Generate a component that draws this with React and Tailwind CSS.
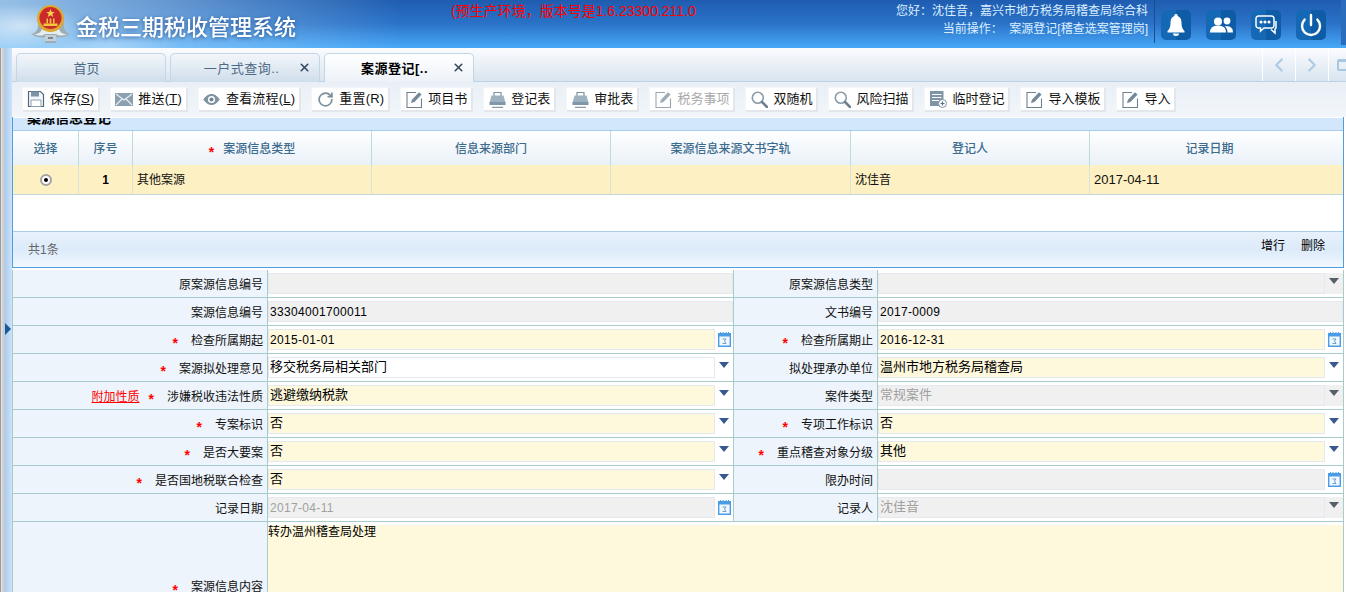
import React from 'react';
import { Power, RotateCw, ChevronLeft, ChevronRight, X } from 'lucide-react';

const Emblem = () => (
  <svg width="40" height="40" viewBox="0 0 40 40" className="mr-[5px] shrink-0">
    <path d="M0 30 C6 29 8 24 7 16 C11 26 29 26 33 16 C32 24 34 29 39 30 C33 34 28 34 25 33 L25 39 L14 39 L14 33 C11 34 6 34 0 30Z" fill="#9eacb5" />
    <path d="M3 30 C8 30 10 28 11 25 C14 28 25 28 28 25 C29 28 31 30 36 30 C31 32 28 32 25 30 L14 30 C11 32 8 32 3 30Z" fill="#e6edf1" />
    <path d="M14 31h11v6H14z" fill="#c4d0d6" />
    <path d="M17 33h5v2h-5z" fill="#76868f" />
    <circle cx="19.500" cy="14.500" r="13.500" fill="#dcaa2e" />
    <circle cx="19.500" cy="14" r="11" fill="#cb2a2c" />
    <path d="M19.500 5l1.200 3h3l-2.400 2 1 3-2.800-1.800L16.700 13l1-3-2.400-2h3z" fill="#f6d24a" />
    <path d="M12.500 19.500h14V22h-14z" fill="#f2c83c" />
    <path d="M15.500 14.500H17v5h-1.500zM22 14.500h1.500v5H22zM18.700 14.500h1.600v5h-1.600z" fill="#f2c83c" />
  </svg>
);

const Tile = ({ children }) => (
  <div className="w-[30px] h-[30px] rounded-[5px] flex items-center justify-center bg-[linear-gradient(to_right,#1568b4_50%,#0f5ca6_50%)]">
    {children}
  </div>
);

const IconSave = () => (
  <svg width="18" height="18" viewBox="0 0 18 18" fill="none">
    <path d="M1.500 1.500h12l3 3v12h-15z" fill="#f5f8fa" stroke="#54687a" strokeWidth="1.200" />
    <path d="M4 1.500h8v5H4z" fill="#7d93a6" />
    <path d="M4 10h10v6.500H4z" fill="#fff" stroke="#8aa0b2" />
  </svg>
);
const IconMail = () => (
  <svg width="18" height="13" viewBox="0 0 18 13">
    <path d="M0 0h18v13H0z" fill="#8ba0b0" />
    <path d="M1 1l8 6 8-6M1 12l6-6M17 12l-6-6" fill="none" stroke="#e8eef3" strokeWidth="1.200" />
  </svg>
);
const IconEye = () => (
  <svg width="17" height="11" viewBox="0 0 18 12">
    <path d="M0 6C3 1.500 6 0 9 0s6 1.500 9 6c-3 4.500-6 6-9 6S3 10.500 0 6Z" fill="#7d939f" />
    <circle cx="9" cy="6" r="3.900" fill="#fff" />
    <circle cx="9" cy="6" r="2.200" fill="#6d8491" />
  </svg>
);
const IconEdit = ({ faded }) => (
  <svg width="17" height="17" viewBox="0 0 17 17" fill="none" className={faded ? 'opacity-70' : ''}>
    <path d="M10 1.500H1v15h14.500V7.500" stroke="#6f8190" strokeWidth="1.100" />
    <path d="M5 12l.9-3.300L13 1.200l2.600 2.400L8.500 11z" fill="#75899a" />
  </svg>
);
const IconBag = () => (
  <svg width="17" height="17" viewBox="0 0 17 17" fill="none">
    <path d="M5 5V1.500h7V5" stroke="#7e92a0" strokeWidth="1.200" />
    <path d="M0.500 12L2.500 4.500h12l2 7.500z" fill="#9db1bf" />
    <path d="M0.500 11h16v3h-16z" fill="#7f97a8" />
    <path d="M3 16.300h11" stroke="#6f8190" />
  </svg>
);
const IconDocPlus = () => (
  <svg width="17" height="17" viewBox="0 0 17 17" fill="none">
    <path d="M0 0h13.500v15H0z" fill="#7e95a6" />
    <path d="M2 3.500h9.500M2 6.500h9.500M2 9.500h7" stroke="#fff" strokeWidth="1.200" />
    <circle cx="12.500" cy="12.500" r="4" fill="#fff" stroke="#7e95a6" />
    <path d="M12.500 10.500v4M10.500 12.500h4" stroke="#56707f" strokeWidth="1.200" />
  </svg>
);
const Magnifier = () => (
  <svg width="17" height="17" viewBox="0 0 17 17" fill="none">
    <circle cx="6.800" cy="6.800" r="5.500" stroke="#8a9ca8" strokeWidth="1.600" />
    <path d="M11 11l5 5" stroke="#6f8190" strokeWidth="2.600" strokeLinecap="round" />
  </svg>
);
const Reload = () => <RotateCw size={17} strokeWidth={2.400} color="#7a8e9b" />;

const Key = ({ k }) => <span className="underline">{k}</span>;

const tools = [
  { icon: <IconSave />, text: <>保存(<Key k="S" />)</>, wide: true },
  { icon: <IconMail />, text: <>推送(<Key k="T" />)</>, wide: true },
  { icon: <IconEye />, text: <>查看流程(<Key k="L" />)</>, wide: true },
  { icon: <Reload />, text: '重置(R)', wide: true },
  { icon: <IconEdit />, text: '项目书' },
  { icon: <IconBag />, text: '登记表' },
  { icon: <IconBag />, text: '审批表' },
  { icon: <IconEdit faded />, text: '税务事项', faded: true },
  { icon: <Magnifier />, text: '双随机' },
  { icon: <Magnifier />, text: '风险扫描' },
  { icon: <IconDocPlus />, text: '临时登记' },
  { icon: <IconEdit />, text: '导入模板' },
  { icon: <IconEdit />, text: '导入' },
];

const Star = () => (
  <span className="text-[#f00] font-bold text-[14px] leading-none mr-[9px] h-[9px]">*</span>
);

const Calendar = () => (
  <svg width="13" height="15" viewBox="0 0 13 15" className="mx-auto">
    <path d="M0.700 1.700h11.600v12.600H0.700z" fill="#f2f8ff" stroke="#4a9ce6" strokeWidth="1.400" />
    <path d="M0 1h13v3.500H0z" fill="#4a9ce6" />
    <path d="M2.500 0v2M5 0v2M8 0v2M10.500 0v2" stroke="#4a9ce6" />
    <path d="M4.500 7h3.500l-1.500 2 1.500 2.500h-3.500" fill="none" stroke="#6f9ccb" />
  </svg>
);
const Arrow = ({ gray }) => (
  <svg width="10" height="6" viewBox="0 0 10 6" className="mx-auto -mt-[5px]">
    <path d="M0 0h10L5 6z" fill={gray ? '#565e6c' : '#39588f'} />
  </svg>
);

const Field = ({ v, bg = 'yellow', adorn, big, muted }) => (
  <div className="flex items-center h-full">
    <div
      className={`flex-1 min-w-0 h-[21px] border border-[#e3e9ee] flex items-center pl-[1px] ${
        bg === 'yellow' ? 'bg-[#fef8dc]' : bg === 'gray' ? 'bg-[#f0f0f0]' : 'bg-white'
      } ${big ? 'text-[13px] pb-[2px]' : 'text-[12px] tracking-[0.33px] pt-[1px]'} ${muted ? 'text-[#a0a0a0]' : 'text-black'}`}
    >
      {v}
    </div>
    {adorn && (
      <div className={`w-[18px] flex items-center ${adorn === 'gray' ? 'bg-[#f0f0f0] h-[21px]' : 'h-full'}`}>
        {adorn === 'cal' ? <Calendar /> : <Arrow gray={adorn === 'gray'} />}
      </div>
    )}
  </div>
);

const rows = [
  [
    { l: '原案源信息编号', bg: 'gray' },
    { l: '原案源信息类型', bg: 'gray', adorn: 'gray' },
  ],
  [
    { l: '案源信息编号', v: '33304001700011', bg: 'gray' },
    { l: '文书编号', v: '2017-0009', bg: 'gray' },
  ],
  [
    { l: '检查所属期起', s: 1, v: '2015-01-01', adorn: 'cal' },
    { l: '检查所属期止', s: 1, v: '2016-12-31', adorn: 'cal' },
  ],
  [
    { l: '案源拟处理意见', s: 1, v: '移交税务局相关部门', bg: 'white', adorn: 'arrow', big: 1 },
    { l: '拟处理承办单位', v: '温州市地方税务局稽查局', adorn: 'arrow', big: 1 },
  ],
  [
    { l: '涉嫌税收违法性质', s: 1, link: '附加性质', v: '逃避缴纳税款', adorn: 'arrow', big: 1 },
    { l: '案件类型', v: '常规案件', bg: 'gray', adorn: 'gray', big: 1, muted: 1 },
  ],
  [
    { l: '专案标识', s: 1, v: '否', adorn: 'arrow', big: 1 },
    { l: '专项工作标识', s: 1, v: '否', adorn: 'arrow', big: 1 },
  ],
  [
    { l: '是否大要案', s: 1, v: '否', adorn: 'arrow', big: 1 },
    { l: '重点稽查对象分级', s: 1, v: '其他', adorn: 'arrow', big: 1 },
  ],
  [
    { l: '是否国地税联合检查', s: 1, v: '否', adorn: 'arrow', big: 1 },
    { l: '限办时间', bg: 'gray', adorn: 'cal' },
  ],
  [
    { l: '记录日期', v: '2017-04-11', bg: 'gray', adorn: 'cal', muted: 1 },
    { l: '记录人', v: '沈佳音', bg: 'gray', adorn: 'gray', big: 1, muted: 1 },
  ],
];

const Label = ({ f }) => (
  <div className="bg-[#edf4fb] border-r border-[#a8cccc] flex items-center justify-end pr-[4px] pt-[2px] text-[12px] text-[#111]">
    {f.link && <a className="text-[#f00] underline mr-[9px]">{f.link}</a>}
    {f.s && <Star />}
    <span className={f.s ? 'ml-[4px]' : ''}>{f.l}</span>
  </div>
);

const columns = ['选择', '序号', '案源信息类型', '信息来源部门', '案源信息来源文书字轨', '登记人', '记录日期'];
const cells = [
  <span className="w-[12px] h-[12px] rounded-full bg-white border-2 border-[#a4a4a4] flex items-center justify-center"><span className="w-[4px] h-[4px] rounded-full bg-black" /></span>,
  <span className="font-bold text-black">1</span>,
  '其他案源',
  '',
  '',
  '沈佳音',
  <span className="text-[13px]">2017-04-11</span>,
];

export default function App() {
  return (
    <div className="w-[1346px] h-[592px] overflow-hidden flex flex-col bg-white font-['Liberation_Sans','Noto_Sans_CJK_SC',sans-serif] text-[12px]">
      {/* header */}
      <header className="h-[48px] shrink-0 flex items-stretch bg-[radial-gradient(ellipse_60px_22px_at_22px_26px,rgba(255,255,255,0.55),transparent),radial-gradient(ellipse_70px_14px_at_110px_46px,rgba(255,255,255,0.25),transparent),linear-gradient(to_right,rgba(190,225,248,0.75),rgba(190,225,248,0)_30%),linear-gradient(to_bottom,#1f5cb0,#2a73c8_50%,#48a8f8)]">
        <div className="flex items-center pl-[31px] w-[449px] shrink-0">
          <Emblem />
          <span className="text-white text-[22px] font-medium leading-none drop-shadow-[0_1px_2px_rgba(20,60,120,0.7)] mt-[8px]">金税三期税收管理系统</span>
        </div>
        <div className="flex-1 min-w-0 text-[#f00] text-[14px] leading-[22px] whitespace-nowrap pl-[2px]">
          (预生产环境，版本号是1.6.23300.211.0
        </div>
        <div className="text-right text-[#dcefff] text-[12px] leading-[18px] pt-[2px] whitespace-nowrap pr-[6px] h-[43px] border-r border-[#17508f]">
          <div>您好：沈佳音，嘉兴市地方税务局稽查局综合科</div>
          <div>当前操作：&nbsp; 案源登记[稽查选案管理岗]</div>
        </div>
        <div className="flex items-start gap-[15px] pt-[10px] pl-[6px] w-[191px] shrink-0">
          <Tile>
            <svg width="18" height="22" viewBox="0 0 18 22" fill="#fff"><path d="M9 0a1.500 1.500 0 0 1 1.500 2C13.500 2.800 14.500 5.500 14.500 9c0 4 1 6 3 8v1.500H.5V17c2-2 3-4 3-8 0-3.500 1-6.200 4-7A1.500 1.500 0 0 1 9 0Z" /><path d="M6 19.500h6a3 2.500 0 0 1-6 0Z" /></svg>
          </Tile>
          <Tile>
            <svg width="23" height="16" viewBox="0 0 23 16" fill="#fff"><circle cx="8" cy="4.500" r="4" /><circle cx="17" cy="4" r="3.400" /><path d="M0 15.500c0-5 3-6.800 8-6.800s8 1.800 8 6.800z" /><path d="M17.500 15.500H23c0-4.500-2.500-6.200-6.500-6.200-.7 0-1.300 0-1.900.2 2 1.200 2.900 3.200 2.900 6z" /></svg>
          </Tile>
          <Tile>
            <svg width="22" height="20" viewBox="0 0 22 20" fill="none" stroke="#fff" strokeWidth="1.500"><path d="M3.500 1h13A2.500 2.500 0 0 1 19 3.500v7a2.500 2.500 0 0 1-2.500 2.500H9l-3.500 3v-3h-2A2.500 2.500 0 0 1 1 10.500v-7A2.500 2.500 0 0 1 3.500 1Z" /><path d="M21 6v7l-1 1v4l-4-3.500" /><circle cx="6" cy="7" r=".8" fill="#fff" /><circle cx="10" cy="7" r=".8" fill="#fff" /><circle cx="14" cy="7" r=".8" fill="#fff" /></svg>
          </Tile>
          <Tile><Power size={24} strokeWidth={2.400} color="#fff" /></Tile>
          <div className="ml-auto w-[5px] h-[45px] -mt-[10px] bg-[#2a6dbd]" />
        </div>
      </header>

      <div className="flex-1 min-h-0 flex">
        {/* collapsed side strip */}
        <div className="relative w-[12px] shrink-0 border-l border-[#9a9a9a] bg-[linear-gradient(to_right,#e4e4e4_0,#c8c8c8_3px,#a9cdf0_4px,#cfe3f8_11px)]">
          <svg width="6" height="12" viewBox="0 0 6 12" className="absolute left-[4px] top-[275px]"><path d="M0 0l6 6-6 6z" fill="#17599c" /></svg>
        </div>

        <div className="flex-1 min-w-0 flex flex-col">
          {/* tabs */}
          <div className="h-[34px] shrink-0 flex items-end pl-[4px] border-b border-[#bcd2e8] bg-[linear-gradient(to_bottom,#fbfcfe,#d9e4ef)]">
            <div className="flex gap-[4px] h-[29px] -mb-[1px]">
              <div className="w-[150px] rounded-t-[5px] border border-b-0 border-[#c3d6e8] bg-[linear-gradient(to_bottom,#f3f6fa,#cfdeec)] flex items-center justify-center pr-[9px] pt-[2px] text-[13px] text-[#4d6a86]">首页</div>
              <div className="relative w-[150px] rounded-t-[5px] border border-b-0 border-[#c3d6e8] bg-[linear-gradient(to_bottom,#f3f6fa,#cfdeec)] flex items-center justify-center pr-[7px] pt-[2px] text-[13px] tracking-[0.5px] text-[#4d6a86]">
                一户式查询..
                <X size={13} strokeWidth={3} color="#36485e" className="absolute right-[8px] top-[7px]" />
              </div>
              <div className="relative w-[150px] rounded-t-[5px] border border-b-0 border-[#c3d6e8] bg-[linear-gradient(to_bottom,#ffffff,#edf2f8)] flex items-center justify-center pr-[9px] pt-[2px] text-[13px] tracking-[0.5px] font-bold text-black">
                案源登记[..
                <X size={13} strokeWidth={3} color="#36485e" className="absolute right-[8px] top-[7px]" />
              </div>
            </div>
            <div className="ml-auto h-[33px] flex">
              <div className="w-[33px] border-l border-white flex items-center justify-center"><ChevronLeft size={22} strokeWidth={2.400} color="#aecbe4" /></div>
              <div className="w-[33px] border-l border-white flex items-center justify-center"><ChevronRight size={22} strokeWidth={2.400} color="#aecbe4" /></div>
              <div className="w-[18px] border-l border-white overflow-hidden flex items-center pl-[8px]">
                <div className="w-[14px] h-[12px] shrink-0 rounded-[2px] border-2 border-t-[3px] border-[#a8c8e2]" />
              </div>
            </div>
          </div>

          {/* toolbar */}
          <div className="h-[35px] shrink-0 flex items-start gap-[11px] pl-[11px] pt-[6px] bg-[linear-gradient(to_bottom,#e9eff6,#f2f6fa)]">
            {tools.map((t, i) => (
              <div key={i} className="h-[24px] flex items-center pl-[4px] pr-[4px] bg-white border-r-2 border-b-2 border-[#e3e6ea] shadow-[-1px_-1px_1px_#f3f6f9] text-[13px] whitespace-nowrap">
                <span className="w-[18px] flex justify-center mr-[5px]">{t.icon}</span>
                <span className={`${t.faded ? 'text-[#a9a9a9]' : 'text-[#111]'} ${t.wide ? 'tracking-[0.2px]' : ''}`}>{t.text}</span>
              </div>
            ))}
          </div>

          {/* list panel */}
          <section className="w-[1332px] shrink-0 border-x border-b border-[#4f9fe0]">
            <div className="h-[14px] overflow-hidden border-t border-white bg-[#d3e7fc] border-b-[#a9cde8] border-b pl-[14px]">
              <div className="text-[14px] font-bold text-black leading-[14px] -mt-[7px]">案源信息登记</div>
            </div>
            <div className="grid grid-cols-[66px_54px_239px_239px_240px_239px_1fr] h-[34px] bg-[linear-gradient(to_bottom,#ffffff,#e9f1f8)] text-[#3c6b8e] font-medium">
              {columns.map((c, i) => (
                <div key={c} className={`flex items-center justify-center pt-[2px] border-r last:border-r-0 border-[#c2d9dc] ${i === 6 ? 'pr-[14px]' : ''}`}>
                  {i === 2 && <span className="text-[#f00] font-bold text-[14px] leading-none mr-[9px] h-[9px]">*</span>}
                  {c}
                </div>
              ))}
            </div>
            <div className="grid grid-cols-[66px_54px_239px_239px_240px_239px_1fr] h-[30px] bg-[#fdf0c2] border-b border-[#c2d9dc] text-[#111]">
              {cells.map((c, i) => (
                <div key={i} className={`flex items-center border-r last:border-r-0 border-[#d8e2d8] ${i < 2 ? 'justify-center' : 'pl-[4px]'}`}>{c}</div>
              ))}
            </div>
            <div className="h-[36px] bg-white" />
            <div className="h-[36px] border-t border-[#a9cde8] bg-[linear-gradient(to_bottom,#e8f1fb,#dceafa_50%,#f2f8ff)] flex items-center pl-[15px] pr-[18px]">
              <span className="text-[#666]">共1条</span>
              <div className="ml-auto flex gap-[16px] -mt-[7px] text-black">
                <span>增行</span>
                <span>删除</span>
              </div>
            </div>
          </section>

          {/* form */}
          <section className="w-[1332px] shrink-0 mt-[2px] border-l border-[#a8cccc]">
            {rows.map((r, i) => (
              <div key={i} className="grid grid-cols-[255px_466px_144px_466px] h-[28px] border-b border-[#a8cccc]">
                <Label f={r[0]} />
                <div className="border-r border-[#a8cccc]"><Field {...r[0]} /></div>
                <Label f={r[1]} />
                <div className="border-r border-[#a8cccc]"><Field {...r[1]} /></div>
              </div>
            ))}
            <div className="grid grid-cols-[255px_1fr] h-[128px]">
              <Label f={{ l: '案源信息内容', s: 1 }} />
              <div className="pt-[3px] border-r border-[#a8cccc]">
                <div className="h-full bg-[#fef8dc] text-black leading-[14px] whitespace-pre">转办温州稽查局处理</div>
              </div>
            </div>
          </section>
        </div>
      </div>
    </div>
  );
}
